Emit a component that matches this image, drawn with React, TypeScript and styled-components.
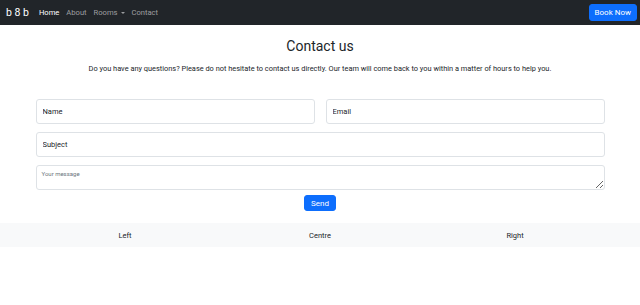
import React from 'react';
import styled, { createGlobalStyle } from 'styled-components';

const GlobalStyle = createGlobalStyle`
  html, body {
    margin: 0;
    padding: 0;
    background: #ffffff;
    font-family: Roboto, "Liberation Sans", sans-serif;
    color: #212529;
  }
  * {
    box-sizing: border-box;
  }
`;

const Navbar = styled.nav`
  height: 25px;
  background: #212529;
  display: flex;
  align-items: center;
  padding: 0 4px 0 6px;
`;

const Brand = styled.span`
  color: #ffffff;
  font-size: 10.5px;
  margin-right: 10px;
`;

const NavList = styled.div`
  display: flex;
  align-items: center;
  gap: 7px;
  flex: 1;
`;

const NavLink = styled.a<{ $active?: boolean }>`
  color: ${({ $active }) => ($active ? '#ffffff' : 'rgba(255, 255, 255, 0.55)')};
  font-size: 7.6px;
  text-decoration: none;
  display: flex;
  align-items: center;
  gap: 3px;
`;

const Caret = styled.span`
  width: 0;
  height: 0;
  border-left: 2.5px solid transparent;
  border-right: 2.5px solid transparent;
  border-top: 2.5px solid rgba(255, 255, 255, 0.55);
`;

const PrimaryButton = styled.button<{ $size?: 'sm' | 'md' }>`
  background: #0d6efd;
  color: #ffffff;
  border: 1px solid #0d6efd;
  border-radius: 3px;
  font-family: inherit;
  font-size: 8px;
  padding: ${({ $size }) => ($size === 'sm' ? '0 6px' : '0 5px')};
  height: ${({ $size }) => ($size === 'sm' ? '16px' : '17px')};
  cursor: pointer;
`;

const NavButton = styled(PrimaryButton)`
  margin-right: -1px;
`;

const Main = styled.main`
  display: flex;
  flex-direction: column;
  align-items: center;
`;

const Title = styled.h1`
  margin: 11px 0 0;
  font-size: 14px;
  font-weight: 400;
  line-height: 20px;
`;

const Lead = styled.p`
  margin: 8px 0 0;
  font-size: 7.4px;
  line-height: 10px;
  text-align: center;
`;

const Form = styled.form`
  width: 569px;
  margin-top: 25px;
  display: flex;
  flex-direction: column;
  gap: 8px;
`;

const Row = styled.div`
  display: grid;
  grid-template-columns: 1fr 1fr;
  gap: 11px;
`;

const Input = styled.input`
  height: 25px;
  width: 100%;
  border: 1px solid #dee2e6;
  border-radius: 3px;
  padding: 0 6px;
  font-family: inherit;
  font-size: 7.5px;
  color: #212529;
  &::placeholder {
    color: #212529;
  }
`;

const TextArea = styled.textarea`
  display: block;
  height: 25px;
  width: 100%;
  border: 1px solid #dee2e6;
  border-radius: 3px;
  padding: 4px 5px;
  font-family: inherit;
  font-size: 6px;
  resize: vertical;
  &::placeholder {
    color: #6c757d;
  }
`;

const Actions = styled.div`
  display: flex;
  justify-content: center;
  margin-top: -3px;
`;

const Footer = styled.footer`
  margin-top: 12px;
  background: #f8f9fa;
  height: 24px;
  display: flex;
  justify-content: center;
`;

const FooterRow = styled.div`
  width: 585px;
  display: grid;
  grid-template-columns: repeat(3, 1fr);
  align-items: center;
`;

const FooterCell = styled.span`
  text-align: center;
  font-size: 7.5px;
  color: #212529;
`;

const App = () => (
  <>
    <GlobalStyle />
    <Navbar>
      <Brand>b 8 b</Brand>
      <NavList>
        <NavLink $active>Home</NavLink>
        <NavLink>About</NavLink>
        <NavLink>
          Rooms <Caret />
        </NavLink>
        <NavLink>Contact</NavLink>
      </NavList>
      <NavButton>Book Now</NavButton>
    </Navbar>
    <Main>
      <Title>Contact us</Title>
      <Lead>
        Do you have any questions? Please do not hesitate to contact us directly. Our team will
        come back to you within a matter of hours to help you.
      </Lead>
      <Form onSubmit={(e) => e.preventDefault()}>
        <Row>
          <Input placeholder="Name" />
          <Input placeholder="Email" />
        </Row>
        <Input placeholder="Subject" />
        <TextArea placeholder="Your message" />
        <Actions>
          <PrimaryButton $size="sm" type="submit">
            Send
          </PrimaryButton>
        </Actions>
      </Form>
    </Main>
    <Footer>
      <FooterRow>
        <FooterCell>Left</FooterCell>
        <FooterCell>Centre</FooterCell>
        <FooterCell>Right</FooterCell>
      </FooterRow>
    </Footer>
  </>
);

export default App;
